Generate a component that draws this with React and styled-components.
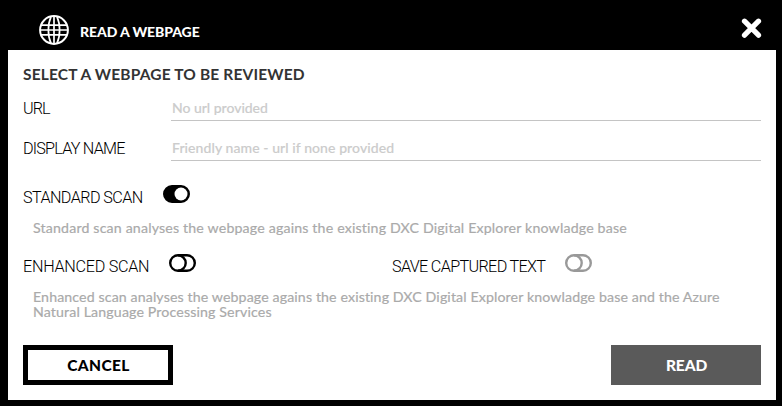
import React from "react";
import styled, { createGlobalStyle } from "styled-components";

const GlobalStyle = createGlobalStyle`
  * { box-sizing: border-box; }
  body {
    margin: 0;
    background: #000;
    font-family: Lato, "Open Sans", sans-serif;
  }
`;

const Dialog = styled.div`
  display: flex;
  flex-direction: column;
  width: 782px;
  height: 406px;
  padding: 0 6px 6px 8px;
  background: #000;
  overflow: hidden;
`;

const Header = styled.header`
  display: flex;
  align-items: flex-start;
  height: 50px;
  flex: none;
  padding: 14px 13px 0 30px;
  color: #fff;
`;

const Title = styled.h1`
  flex: 1;
  margin: 9px 0 0 10px;
  font-size: 14px;
  line-height: 18px;
  font-weight: 900;
  letter-spacing: ${(p) => p.$tracking}px;
  white-space: nowrap;
`;

const IconButton = styled.button`
  display: block;
  margin: 3px 0 0;
  padding: 0;
  border: 0;
  background: none;
  color: inherit;
  line-height: 0;
`;

const Panel = styled.main`
  display: flex;
  flex-direction: column;
  flex: 1;
  padding: 14px 15px 15px;
  background: #fff;
`;

const Heading = styled.h2`
  margin: 0;
  height: 20px;
  font-size: 15.5px;
  line-height: 20px;
  font-weight: 700;
  letter-spacing: ${(p) => p.$tracking}px;
  color: #333;
  white-space: nowrap;
`;

const Field = styled.label`
  display: grid;
  grid-template-columns: 148px 1fr;
  height: 40px;
  align-items: start;
`;

const Label = styled.span`
  font-family: Roboto, sans-serif;
  font-weight: 300;
  font-size: 16.2px;
  line-height: 22px;
  letter-spacing: ${(p) => p.$tracking}px;
  color: #000;
  white-space: nowrap;
`;

const FieldLabel = styled(Label)`
  margin-top: 14px;
`;

const Input = styled.input`
  width: 100%;
  height: 28px;
  margin-top: 9px;
  padding: 2px 0 0 1px;
  border: 0;
  border-bottom: 1px solid #c4c4c4;
  border-radius: 0;
  outline: 0;
  background: transparent;
  font-family: inherit;
  font-size: 14px;
  font-weight: 500;
  letter-spacing: ${(p) => p.$tracking}px;
  -webkit-text-stroke: 0.15px #ccc;
  &::placeholder { color: #ccc; opacity: 1; }
`;

const Options = styled.div`
  display: grid;
  grid-template-columns: 369px 1fr;
  height: 20px;
  margin-top: ${(p) => p.$top}px;
`;

const Option = styled.div`
  display: flex;
  align-items: flex-start;
`;

const Toggle = styled.button`
  margin: -2px 0 0 19.6px;
  padding: 0;
  border: 0;
  background: none;
  line-height: 0;
  color: ${(p) => (p.$muted ? "#999" : "#000")};
`;

const OptionLabel = styled(Label)`
  width: ${(p) => p.$width}px;
`;

const Hint = styled.p`
  margin: 13px 0 1px 10px;
  font-size: 14.2px;
  line-height: 15px;
  color: #aaa;
  -webkit-text-stroke: 0.2px #aaa;
`;

const HintLine = styled.span`
  display: block;
  letter-spacing: ${(p) => p.$tracking}px;
  white-space: nowrap;
`;

const Actions = styled.footer`
  display: flex;
  justify-content: space-between;
  margin-top: auto;
`;

const Button = styled.button`
  width: 150px;
  height: 40px;
  padding: 0 0 1px 1px;
  border: 5px solid ${(p) => (p.$filled ? "#5a5a5a" : "#000")};
  border-radius: 0;
  background: ${(p) => (p.$filled ? "#5a5a5a" : "#fff")};
  color: ${(p) => (p.$filled ? "#fff" : "#000")};
  font-family: inherit;
  font-size: 15.5px;
  font-weight: 900;
  letter-spacing: ${(p) => p.$tracking}px;
`;

const Globe = () => (
  <svg width="32" height="32" viewBox="0 0 32 32" fill="none" stroke="#fff" strokeWidth="2">
    <circle cx="16" cy="16" r="13.9" />
    <path d="M13 2.8C9.5 10 9.5 22 13 29.2M19 2.8C22.5 10 22.5 22 19 29.2M16 2v28M3 11.2h26M2 16h28M3 20.8h26" strokeWidth="1.7" />
  </svg>
);

const Cross = () => (
  <svg width="22" height="22" viewBox="0 0 22 22" stroke="#fff" strokeWidth="5.2" strokeLinecap="round">
    <path d="M3.5 4.2l14 14M17.5 4.2l-14 14" />
  </svg>
);

const Switch = ({ on }) => (
  <svg width="27" height="18" viewBox="0 0 27 18" fill="none" stroke="currentColor" strokeWidth="2.4">
    <rect x="1.2" y="1.2" width="24.6" height="15.6" rx="7.8" fill={on ? "currentColor" : "none"} />
    {on ? (
      <circle cx="18" cy="9" r="6.5" fill="#fff" stroke="none" />
    ) : (
      <path d="M9 1.3c4.3 0 7.7 3.4 7.7 7.7s-3.4 7.7-7.7 7.7" />
    )}
  </svg>
);

export default function App() {
  return (
    <>
      <GlobalStyle />
      <Dialog>
        <Header>
          <Globe />
          <Title $tracking={-0.1}>READ A WEBPAGE</Title>
          <IconButton aria-label="Close"><Cross /></IconButton>
        </Header>
        <Panel>
          <Heading $tracking={0.16}>SELECT A WEBPAGE TO BE REVIEWED</Heading>
          <Field>
            <FieldLabel $tracking={-1}>URL</FieldLabel>
            <Input $tracking={-0.02} placeholder="No url provided" />
          </Field>
          <Field>
            <FieldLabel $tracking={-0.8}>DISPLAY NAME</FieldLabel>
            <Input $tracking={0.08} placeholder="Friendly name - url if none provided" />
          </Field>
          <Options $top={23}>
            <Option>
              <OptionLabel $width={120} $tracking={-0.6}>STANDARD SCAN</OptionLabel>
              <Toggle aria-label="Standard scan"><Switch on /></Toggle>
            </Option>
          </Options>
          <Hint>
            <HintLine $tracking={0.16}>Standard scan analyses the webpage agains the existing DXC Digital Explorer knowladge base</HintLine>
          </Hint>
          <Options $top={20}>
            <Option>
              <OptionLabel $width={126} $tracking={-0.28}>ENHANCED SCAN</OptionLabel>
              <Toggle aria-label="Enhanced scan"><Switch /></Toggle>
            </Option>
            <Option>
              <OptionLabel $width={153} $tracking={-0.66}>SAVE CAPTURED TEXT</OptionLabel>
              <Toggle $muted aria-label="Save captured text"><Switch /></Toggle>
            </Option>
          </Options>
          <Hint>
            <HintLine $tracking={0.11}>Enhanced scan analyses the webpage agains the existing DXC Digital Explorer knowladge base and the Azure</HintLine>
            <HintLine $tracking={0.13}>Natural Language Processing Services</HintLine>
          </Hint>
          <Actions>
            <Button $tracking={0.4}>CANCEL</Button>
            <Button $filled $tracking={-0.1}>READ</Button>
          </Actions>
        </Panel>
      </Dialog>
    </>
  );
}
